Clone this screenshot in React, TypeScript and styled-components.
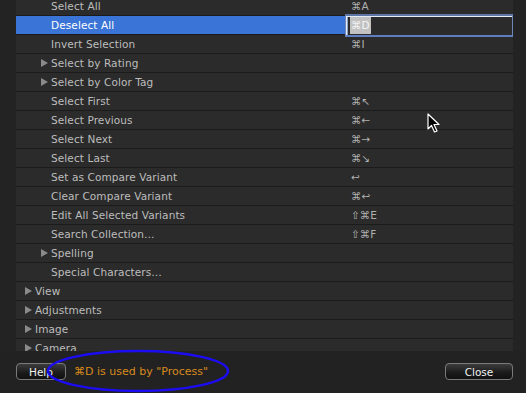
import React from 'react';
import styled, { createGlobalStyle } from 'styled-components';

type Item = {
	label: string;
	level: number;
	group?: boolean;
	keys?: string;
	selected?: boolean;
};

const items: Item[] = [
	{ label: 'Select All', level: 1, keys: '⌘A' },
	{ label: 'Deselect All', level: 1, keys: '⌘D', selected: true },
	{ label: 'Invert Selection', level: 1, keys: '⌘I' },
	{ label: 'Select by Rating', level: 1, group: true },
	{ label: 'Select by Color Tag', level: 1, group: true },
	{ label: 'Select First', level: 1, keys: '⌘↖' },
	{ label: 'Select Previous', level: 1, keys: '⌘←' },
	{ label: 'Select Next', level: 1, keys: '⌘→' },
	{ label: 'Select Last', level: 1, keys: '⌘↘' },
	{ label: 'Set as Compare Variant', level: 1, keys: '↩' },
	{ label: 'Clear Compare Variant', level: 1, keys: '⌘↩' },
	{ label: 'Edit All Selected Variants', level: 1, keys: '⇧⌘E' },
	{ label: 'Search Collection…', level: 1, keys: '⇧⌘F' },
	{ label: 'Spelling', level: 1, group: true },
	{ label: 'Special Characters…', level: 1 },
	{ label: 'View', level: 0, group: true },
	{ label: 'Adjustments', level: 0, group: true },
	{ label: 'Image', level: 0, group: true },
	{ label: 'Camera', level: 0, group: true },
];

const GlobalStyle = createGlobalStyle`
	html, body {
		margin: 0;
		padding: 0;
		background: #232323;
		overflow: hidden;
	}
	* { box-sizing: border-box; }
`;

const App = () => {
	return (
		<>
			<GlobalStyle />
			<Page>
				<List>
					<Rows>
						{items.map((it) => (
							<Row key={it.label} $selected={it.selected}>
								<NameCell $level={it.level}>
									<Toggle>{it.group && <Triangle />}</Toggle>
									{it.label}
								</NameCell>
								{it.selected ? (
									<EditField>
										<Highlight>{it.keys}</Highlight>
									</EditField>
								) : (
									<KeyCell>{it.keys}</KeyCell>
								)}
							</Row>
						))}
					</Rows>
					<Cursor width='14' height='20' viewBox='0 0 14 20'>
						<path d='M1 1 L1 16 L4.5 12.5 L7.5 19 L10 18 L7 11.5 L12 11.5 Z' fill='#000' stroke='#fff' strokeWidth='1.2' strokeLinejoin='round' />
					</Cursor>
				</List>
				<Footer>
					<Button $width={50}>Help</Button>
					<Message>⌘D is used by "Process"</Message>
					<Button $width={68}>Close</Button>
					<Ring width='186' height='46' viewBox='0 0 186 46'>
						<ellipse cx='93' cy='23' rx='90' ry='20' fill='none' stroke='#1c0cf2' strokeWidth='2.5' />
					</Ring>
				</Footer>
			</Page>
		</>
	);
};

const Page = styled.div`
	width: 526px;
	height: 393px;
	display: flex;
	flex-direction: column;
	font-family: 'DejaVu Sans', 'Liberation Sans', sans-serif;
	font-size: 10.5px;
`;

const List = styled.div`
	position: relative;
	margin: 0 13px 0 16px;
	height: 351px;
	overflow: hidden;
	background: #2b2b2b;
`;

const Rows = styled.div`
	margin-top: -3px;
`;

const Row = styled.div<{ $selected?: boolean }>`
	display: grid;
	grid-template-columns: 329px 1fr;
	height: 19px;
	border-bottom: 1px solid #1b1b1b;
	background: #2b2b2b;
	color: #bdbdbd;
	${(p) =>
		p.$selected &&
		`
		background: linear-gradient(to right, #3a74d6 329px, #2b2b2b 329px);
		color: #fff;
	`}
`;

const NameCell = styled.div<{ $level: number }>`
	display: flex;
	align-items: center;
	padding-left: ${(p) => 9 + p.$level * 16}px;
	white-space: nowrap;
	letter-spacing: 0.1px;
`;

const Toggle = styled.span`
	display: inline-flex;
	align-items: center;
	width: 10px;
	height: 8px;
`;

const Triangle = styled.span`
	width: 0;
	height: 0;
	border-top: 4px solid transparent;
	border-bottom: 4px solid transparent;
	border-left: 7px solid #8a8a8a;
`;

const KeyCell = styled.div`
	display: flex;
	align-items: center;
	padding-left: 6px;
	color: #b0b0b0;
`;

const EditField = styled.div`
	display: flex;
	align-items: center;
	margin: -2px 0 -3px;
	padding-left: 4px;
	background: #2b2b2b;
	border: 1px solid #6f88b6;
	border-top: 2px solid #5d76a6;
	border-bottom: 2px solid #5d7fc0;
	box-shadow: inset 1px 1px 0 #e6ecf5, inset 2px 0 0 #8ea4cc;
	position: relative;
	z-index: 1;
`;

const Highlight = styled.span`
	background: #c2c2c2;
	color: #f4f4f4;
	padding: 1px 1px;
	line-height: 15px;
`;

const Cursor = styled.svg`
	position: absolute;
	left: 411px;
	top: 113px;
`;

const Footer = styled.div`
	position: relative;
	flex: 1;
	display: flex;
	align-items: center;
	padding: 0 13px 1px 16px;
	background: #222;
`;

const Button = styled.div<{ $width: number }>`
	width: ${(p) => p.$width}px;
	height: 17px;
	border: 1px solid #7a7a7a;
	border-radius: 4px;
	background: linear-gradient(#3c3c3c, #1a1a1a 60%, #111);
	color: #f0f0f0;
	display: flex;
	align-items: center;
	justify-content: center;
	font-size: 10.5px;
	&:last-of-type {
		margin-left: auto;
	}
`;

const Message = styled.div`
	margin-left: 8px;
	color: #d88a1c;
	font-size: 11px;
`;

const Ring = styled.svg`
	position: absolute;
	left: 45px;
	top: -3px;
`;

export default App;
